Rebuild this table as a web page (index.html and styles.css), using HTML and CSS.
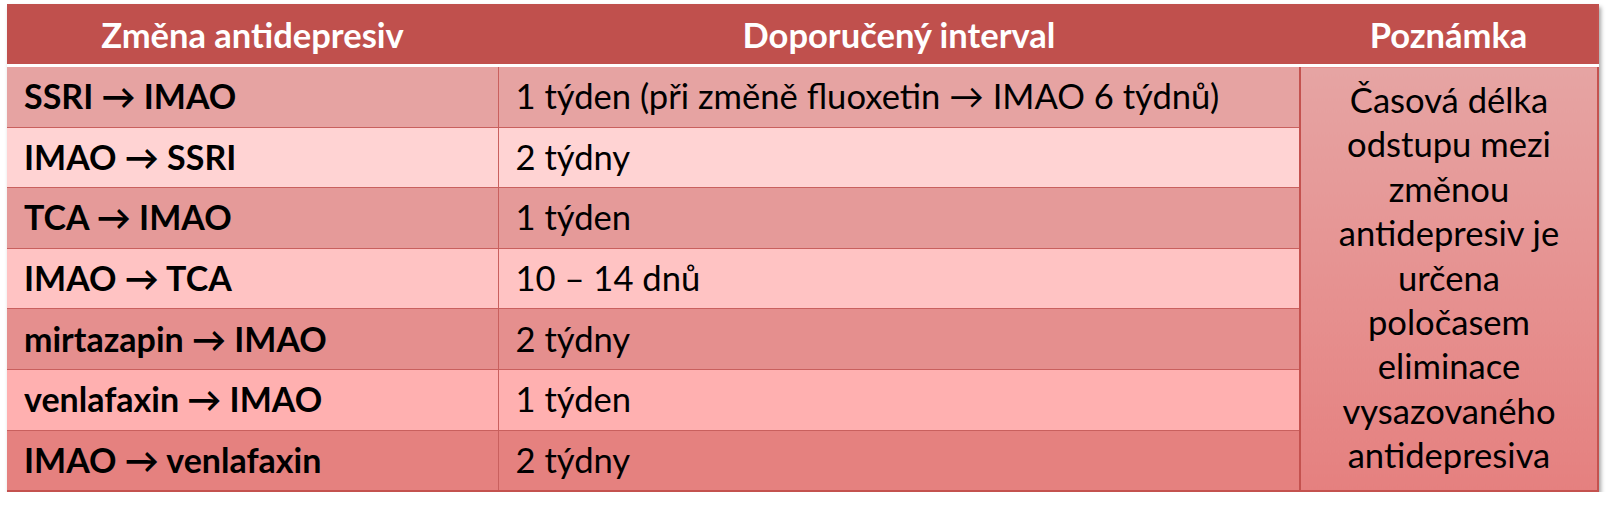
FILE: index.html
```html
<!DOCTYPE html>
<html lang="cs">
<head>
<meta charset="utf-8">
<title>Změna antidepresiv</title>
<link rel="stylesheet" href="styles.css">
</head>
<body>
<table class="tbl">
  <colgroup>
    <col class="c1"><col class="c2"><col class="c3">
  </colgroup>
  <thead>
    <tr class="head">
      <th>Změna antidepresiv</th>
      <th>Doporučený interval</th>
      <th>Poznámka</th>
    </tr>
  </thead>
  <tbody>
    <tr class="r r1">
      <td class="drug">SSRI → IMAO</td>
      <td class="int">1 týden (při změně fluoxetin → IMAO 6 týdnů)</td>
      <td class="note" rowspan="7"><div class="note-text">Časová délka odstupu mezi změnou antidepresiv je určena poločasem eliminace vysazovaného antidepresiva</div></td>
    </tr>
    <tr class="r r2"><td class="drug">IMAO → SSRI</td><td class="int">2 týdny</td></tr>
    <tr class="r r3"><td class="drug">TCA → IMAO</td><td class="int">1 týden</td></tr>
    <tr class="r r4"><td class="drug">IMAO → TCA</td><td class="int">10 – 14 dnů</td></tr>
    <tr class="r r5"><td class="drug">mirtazapin → IMAO</td><td class="int">2 týdny</td></tr>
    <tr class="r r6"><td class="drug">venlafaxin → IMAO</td><td class="int">1 týden</td></tr>
    <tr class="r r7"><td class="drug">IMAO → venlafaxin</td><td class="int">2 týdny</td></tr>
  </tbody>
</table>
</body>
</html>
```

FILE: styles.css
```css
html, body {
  margin: 0;
  padding: 0;
  background: #ffffff;
}
body {
  padding: 4px 0 0 7px;
  font-family: Lato, "Liberation Sans", sans-serif;
  color: #000;
}
.tbl {
  border-collapse: collapse;
  width: 1591px;
  table-layout: fixed;
  box-shadow: 2px 3px 4px rgba(0,0,0,0.35);
  border-right: 2px solid #c4524f;
  border-bottom: 2px solid #c4524f;
}
.c1 { width: 491px; }
.c2 { width: 802px; }
.c3 { width: 298px; }
.head th {
  background: #c0504d;
  color: #ffffff;
  font-weight: 700;
  font-size: 34.5px;
  height: 60px;
  padding: 0;
  text-align: center;
  vertical-align: middle;
  border-bottom: 3px solid #ffffff;
}
.r td {
  height: 57.6px;
  padding: 0 0 2px 17px;
  font-size: 34.6px;
  vertical-align: middle;
  border-bottom: 1px solid #c9605e;
  border-right: 1px solid #c9605e;
  white-space: nowrap;
}
.r td.drug { font-weight: 700; font-size: 34px; }
.r7 td { border-bottom: none; }
.r1 td { background: #e6a3a2; }
.r2 td { background: #ffd3d3; }
.r3 td { background: #e59a99; }
.r4 td { background: #ffc3c3; }
.r5 td { background: #e58f8e; }
.r6 td { background: #ffb0b0; }
.r7 td { background: #e5817f; }
.r td.note {
  background: linear-gradient(#e6a4a3, #e5807f);
  border-left: 2px solid #c4524f;
  border-right: none;
  vertical-align: top;
  text-align: center;
  white-space: normal;
  padding: 11px 24px 0 24px;
}
.note-text {
  line-height: 44.4px;
}
```
